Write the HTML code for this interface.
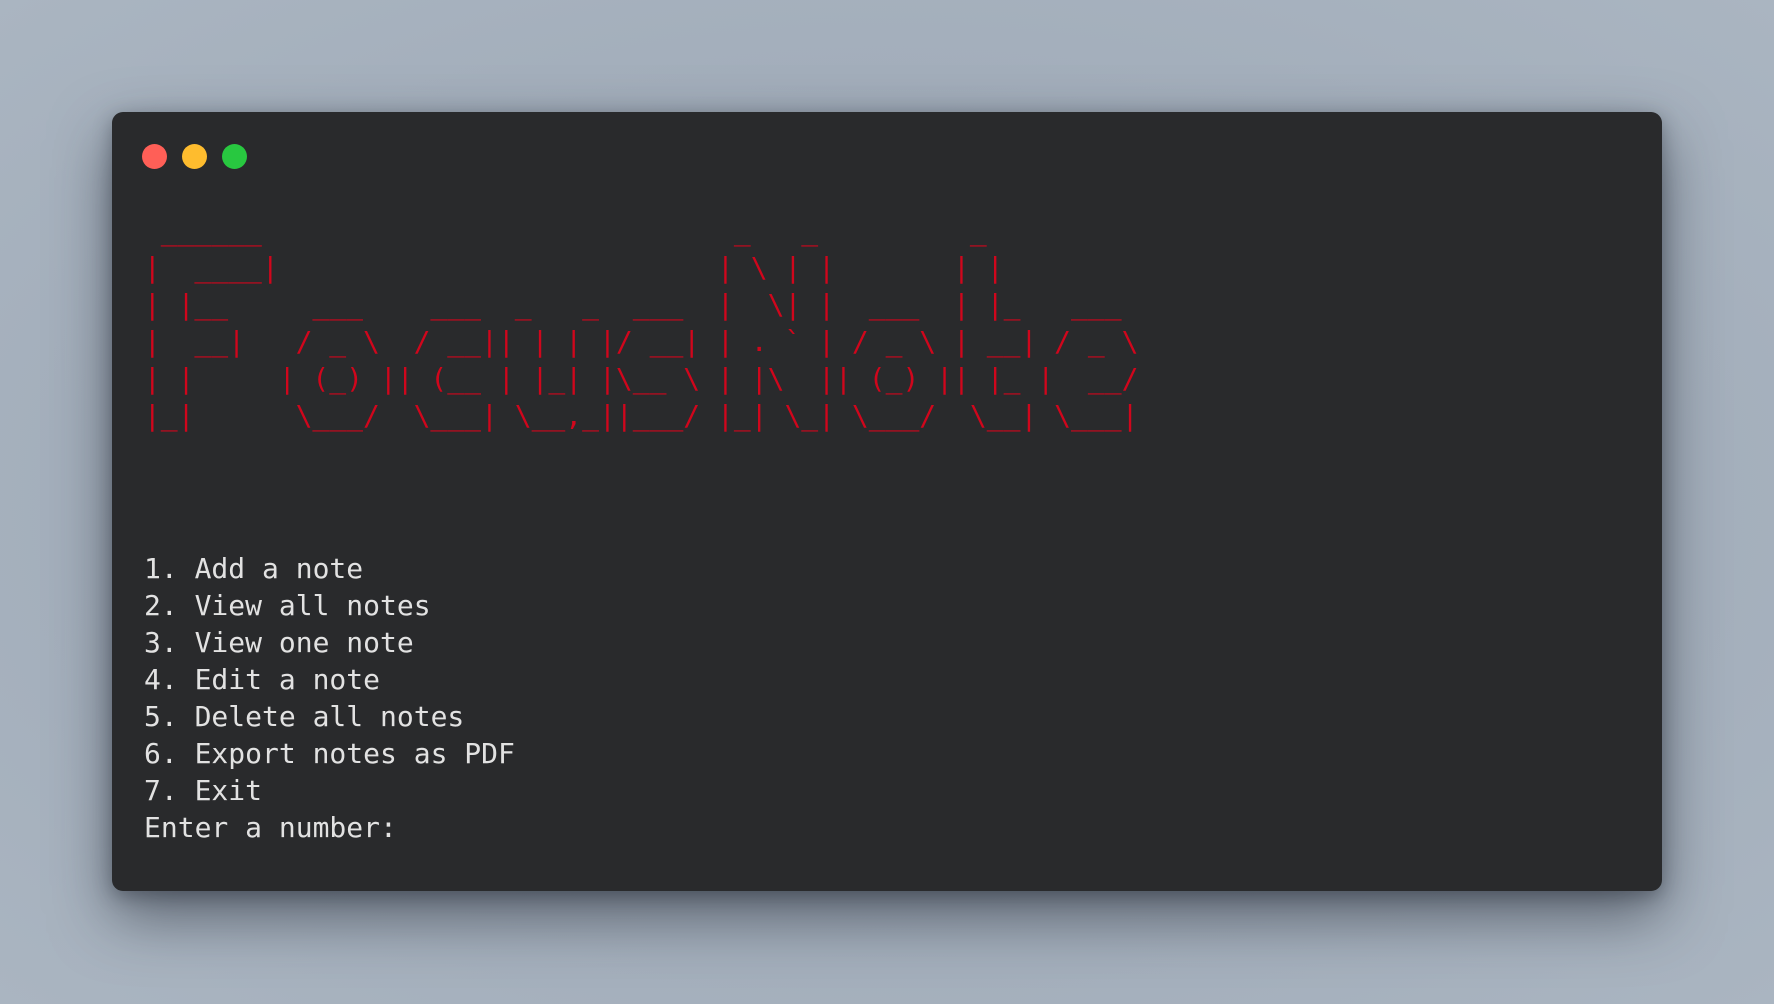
<!DOCTYPE html>
<html><head><meta charset="utf-8"><style>
html,body{margin:0;padding:0;}
body{width:1774px;height:1004px;overflow:hidden;position:relative;
background:radial-gradient(ellipse at 50% 50%,#8f9aa6 0%,#a3aebb 60%,#aab5c1 100%);}
.win{position:absolute;left:112px;top:112px;width:1550px;height:779px;background:#292a2c;border-radius:11px;
box-shadow:0 25px 60px rgba(30,35,45,0.55),0 5px 18px rgba(30,35,45,0.35);}
.dot{position:absolute;top:144px;width:25px;height:25px;border-radius:50%;}
pre{position:absolute;margin:0;font-family:"DejaVu Sans Mono","Liberation Mono",monospace;font-size:28px;line-height:37px;white-space:pre;}
.art{left:127px;top:212px;color:#d0061c;}
.menu{left:144px;top:550px;color:#e2e2e2;}
</style></head><body>
<div class="win"></div>
<div class="dot" style="left:142px;background:#ff5f57"></div>
<div class="dot" style="left:182px;background:#febc2e"></div>
<div class="dot" style="left:222px;background:#28c840"></div>
<pre class="art">  ______                            _   _         _
 |  ____|                          | \ | |       | |
 | |__     ___    ___  _   _  ___  |  \| |  ___  | |_   ___
 |  __|   / _ \  / __|| | | |/ __| | . ` | / _ \ | __| / _ \
 | |     | (_) || (__ | |_| |\__ \ | |\  || (_) || |_ |  __/
 |_|      \___/  \___| \__,_||___/ |_| \_| \___/  \__| \___|</pre>
<pre class="menu">1. Add a note
2. View all notes
3. View one note
4. Edit a note
5. Delete all notes
6. Export notes as PDF
7. Exit
Enter a number:</pre>
</body></html>
